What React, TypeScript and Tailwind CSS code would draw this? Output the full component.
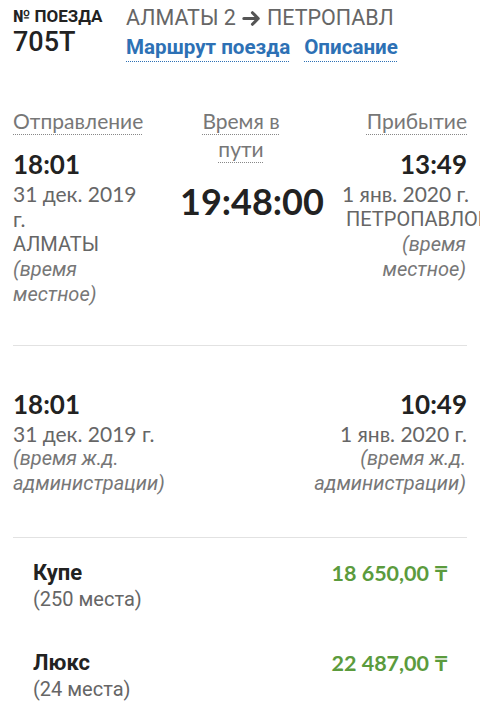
// TrainDetails.tsx
const lato = "font-['Lato','Noto_Sans',sans-serif]";
const roboto = "font-['Roboto','Noto_Sans',sans-serif]";

interface SeatClass {
  name: string;
  seats: string;
  price: string;
}

const seatClasses: SeatClass[] = [
  { name: "Купе", seats: "(250 места)", price: "18 650,00 ₸" },
  { name: "Люкс", seats: "(24 места)", price: "22 487,00 ₸" },
];

const Dotted = ({ children }: { children: React.ReactNode }) => (
  <span className="underline decoration-dotted decoration-[#888] decoration-1 underline-offset-[5px]">
    {children}
  </span>
);

const App = () => {
  return (
    <div className="w-[480px] h-[706px] overflow-hidden bg-white text-[#222]">
      {/* header */}
      <div className={`flex pl-[13px] pt-[5px] ${roboto}`}>
        <div className="w-[113px] shrink-0">
          <div className="text-[17px] leading-[22px] font-bold">№ ПОЕЗДА</div>
          <div className="text-[27px] leading-[30px] font-medium">705T</div>
        </div>
        <div>
          <div className="flex items-center text-[21.5px] leading-[26px] text-[#666] whitespace-nowrap">
            АЛМАТЫ 2
            <svg
              viewBox="0 0 24 24"
              className="w-[23px] h-[23px] mx-[4px]"
              fill="none"
              stroke="#555"
              strokeWidth="3.2"
              strokeLinecap="round"
              strokeLinejoin="round"
            >
              <path d="M4 12h15M13 6l6 6-6 6" />
            </svg>
            ПЕТРОПАВЛ
          </div>
          <div className="flex gap-[14px] mt-[3px] text-[20.6px] leading-[26px] font-bold text-[#2d71b5]">
            <span className="underline decoration-dotted decoration-[#2d71b5] decoration-1 underline-offset-[7px]">
              Маршрут поезда
            </span>
            <span className="underline decoration-dotted decoration-[#2d71b5] decoration-1 underline-offset-[7px]">
              Описание
            </span>
          </div>
        </div>
      </div>

      {/* local times */}
      <div className="flex mx-[13px] mt-[47px] pb-[38px] border-b border-[#e2e2e2]">
        <div className="w-[130px] shrink-0">
          <div className={`${lato} text-[21px] leading-[28px] text-[#777]`}>
            <Dotted>Отправление</Dotted>
          </div>
          <div className={`${lato} mt-[13px] text-[26px] leading-[33px] font-bold`}>18:01</div>
          <div className={`${lato} text-[21px] leading-[25px] text-[#666]`}>31 дек. 2019 г.</div>
          <div className={`${roboto} text-[20px] leading-[26px] text-[#666]`}>АЛМАТЫ</div>
          <div className={`${roboto} text-[20px] leading-[25px] text-[#777] italic`}>
            (время местное)
          </div>
        </div>
        <div className="w-[122px] ml-[37px] shrink-0 text-center">
          <div className={`${lato} text-[21px] leading-[28px] text-[#777]`}>
            <Dotted>Время в пути</Dotted>
          </div>
          <div className={`${lato} mt-[18px] text-[36px] leading-[40px] font-bold`}>19:48:00</div>
        </div>
        <div className="w-[125px] ml-auto shrink-0 text-right">
          <div className={`${lato} text-[21px] leading-[28px] text-[#777]`}>
            <Dotted>Прибытие</Dotted>
          </div>
          <div className={`${lato} mt-[13px] text-[26px] leading-[33px] font-bold`}>13:49</div>
          <div className={`${lato} text-[21px] leading-[25px] text-[#666] whitespace-nowrap`}>
            1 янв. 2020 г.
          </div>
          <div className={`${roboto} text-[20px] leading-[26px] text-[#666] text-left pl-[4px]`}>
            ПЕТРОПАВЛОВСК
          </div>
          <div className={`${roboto} text-[20px] leading-[25px] text-[#777] italic pr-[1px]`}>
            (время местное)
          </div>
        </div>
      </div>

      {/* railway administration times */}
      <div className="flex justify-between mx-[13px] pt-[42px] pb-[41px] border-b border-[#e2e2e2]">
        <div>
          <div className={`${lato} text-[26px] leading-[33px] font-bold`}>18:01</div>
          <div className={`${lato} text-[21px] leading-[25px] text-[#666]`}>31 дек. 2019 г.</div>
          <div className={`${roboto} text-[20px] leading-[25px] text-[#777] italic`}>
            (время ж.д.
            <br />
            администрации)
          </div>
        </div>
        <div className="text-right">
          <div className={`${lato} text-[26px] leading-[33px] font-bold`}>10:49</div>
          <div className={`${lato} text-[21px] leading-[25px] text-[#666]`}>1 янв. 2020 г.</div>
          <div className={`${roboto} text-[20px] leading-[25px] text-[#777] italic pr-[1px]`}>
            (время ж.д.
            <br />
            администрации)
          </div>
        </div>
      </div>

      {/* seats */}
      <div className="pl-[33px] pr-[32px] pt-[22px]">
        {seatClasses.map((s) => (
          <div key={s.name} className="flex justify-between mb-[38px]">
            <div>
              <div className={`${roboto} text-[22px] leading-[26px] font-bold`}>{s.name}</div>
              <div className={`${roboto} text-[20px] leading-[26px] text-[#666]`}>{s.seats}</div>
            </div>
            <div className={`${lato} text-[21.5px] leading-[26px] font-bold text-[#5b9b3d]`}>
              {s.price}
            </div>
          </div>
        ))}
      </div>
    </div>
  );
};

export default App;
